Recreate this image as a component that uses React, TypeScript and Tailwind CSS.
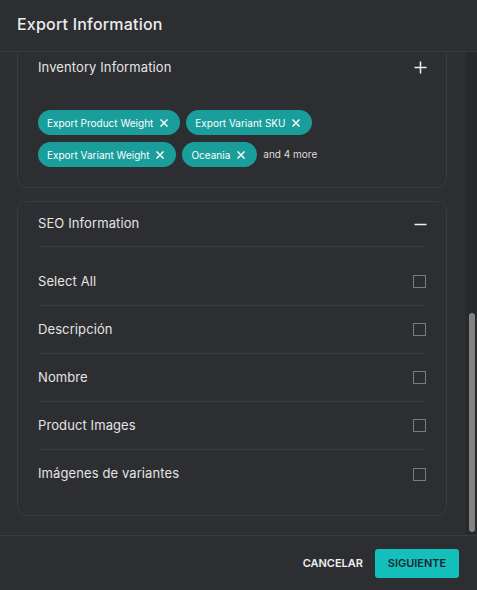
const chipsRow1 = ['Export Product Weight', 'Export Variant SKU'];
const chipsRow2 = ['Export Variant Weight', 'Oceania'];

const seoItems = ['Select All', 'Descripción', 'Nombre', 'Product Images', 'Imágenes de variantes'];

function Chip({ label }: { label: string }) {
  return (
    <div className="flex items-center h-[25px] rounded-full bg-[#1a9e9b] pl-[9px] pr-[12px] gap-[7px]">
      <span className="text-[10px] text-white leading-none">{label}</span>
      <svg width="8" height="8" viewBox="0 0 8 8">
        <path d="M0.5 0.5l7 7M7.5 0.5l-7 7" stroke="#ffffff" strokeWidth="1.5" />
      </svg>
    </div>
  );
}

export default function App() {
  return (
    <div
      className="w-[477px] h-[590px] flex flex-col bg-[#2d2e31] text-[#e4e4e4] overflow-hidden"
      style={{ fontFamily: 'Inter, "Noto Sans", sans-serif' }}
    >
      {/* header */}
      <div className="h-[52px] shrink-0 flex items-center px-[17px] pb-[4px] border-b border-[#3a3b3e]">
        <h1 className="text-[16px] font-medium text-[#ececec] tracking-[0.2px]">Export Information</h1>
      </div>

      {/* scroll body */}
      <div className="flex-1 flex min-h-0">
        <div className="flex-1 overflow-hidden">
          <div className="-mt-[8px] pl-[17px] pr-[19px] flex flex-col gap-[13px]">
            {/* inventory card */}
            <div className="border border-[#3a3b3e] rounded-[10px] pl-[20px] pr-[20px] pb-[20px]">
              <div className="h-[45px] flex items-center justify-between">
                <span className="text-[13px] tracking-[0.1px]">Inventory Information</span>
                <svg width="13" height="13" viewBox="0 0 13 13" className="mr-[-1px]">
                  <path d="M6.5 0.5v12M0.5 6.5h12" stroke="#f2f2f2" strokeWidth="1.5" />
                </svg>
              </div>
              <div className="mt-[20px] flex flex-col gap-[7px]">
                <div className="flex gap-[6px]">
                  {chipsRow1.map((c) => (
                    <Chip key={c} label={c} />
                  ))}
                </div>
                <div className="flex gap-[6px] items-center">
                  {chipsRow2.map((c) => (
                    <Chip key={c} label={c} />
                  ))}
                  <span className="text-[10px] text-[#dcdcdc]">and 4 more</span>
                </div>
              </div>
            </div>

            {/* seo card */}
            <div className="border border-[#3a3b3e] rounded-[10px] px-[20px] pb-[17px]">
              <div className="h-[45px] flex items-center justify-between border-b border-[#3a3b3e]">
                <span className="text-[13px] tracking-[0.1px]">SEO Information</span>
                <svg width="13" height="13" viewBox="0 0 13 13" className="mr-[-1px]">
                  <path d="M0.5 6.5h12" stroke="#f2f2f2" strokeWidth="1.5" />
                </svg>
              </div>
              <div className="pt-[11px]">
                {seoItems.map((item, i) => (
                  <div
                    key={item}
                    className={`h-[48px] flex items-center justify-between ${
                      i < seoItems.length - 1 ? 'border-b border-[#3a3b3e]' : ''
                    }`}
                  >
                    <span className="text-[13px] tracking-[0.1px]">{item}</span>
                    <div className="w-[13px] h-[13px] border border-[#7a7b7e]" />
                  </div>
                ))}
              </div>
            </div>
          </div>
        </div>

        {/* scrollbar */}
        <div className="w-[11px] shrink-0 bg-[#28292b] flex justify-center">
          <div className="w-[6px] h-[219px] mt-[261px] rounded-full bg-[#828282]" />
        </div>
      </div>

      {/* footer */}
      <div className="h-[55px] shrink-0 border-t border-[#3a3b3e] flex items-center justify-end pr-[18px] gap-[12px]">
        <button className="text-[11px] font-semibold text-[#f0f0f0] uppercase">Cancelar</button>
        <button className="w-[84px] h-[29px] rounded-[3px] bg-[#14bfbc] text-[11px] font-semibold text-[#1d2a2c] uppercase">
          Siguiente
        </button>
      </div>
    </div>
  );
}
